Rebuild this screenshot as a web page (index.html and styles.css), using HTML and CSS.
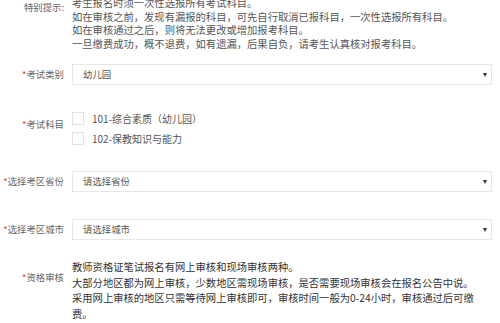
FILE: index.html
```html
<!DOCTYPE html>
<html lang="zh-CN">

<head>
    <meta charset="utf-8">
    <meta name="viewport" content="width=device-width, initial-scale=1.0">
    <title>报名信息</title>

    <link rel="stylesheet" href="styles.css">

</head>

<body>

    <form class="baoming">

        <div class="rad tips">
            <span class="label">特别提示:</span>
            <div class="felt tekst">
                考生报名时须一次性选报所有考试科目。<br>
                如在审核之前，发现有漏报的科目，可先自行取消已报科目，一次性选报所有科目。<br>
                如在审核通过之后，则将无法更改或增加报考科目。<br>
                一旦缴费成功，概不退费，如有遗漏，后果自负，请考生认真核对报考科目。
            </div>
        </div>

        <div class="rad">
            <span class="label"><i>*</i>考试类别</span>
            <div class="felt vaelg">幼儿园</div>
        </div>

        <div class="rad fag">
            <span class="label"><i>*</i>考试科目</span>
            <div class="felt">
                <label class="boks"><span class="kryds"></span>101-综合素质（幼儿园）</label>
                <label class="boks"><span class="kryds"></span>102-保教知识与能力</label>
            </div>
        </div>

        <div class="rad">
            <span class="label"><i>*</i>选择考区省份</span>
            <div class="felt vaelg">请选择省份</div>
        </div>

        <div class="rad">
            <span class="label"><i>*</i>选择考区城市</span>
            <div class="felt vaelg">请选择城市</div>
        </div>

        <div class="rad review">
            <span class="label"><i>*</i>资格审核</span>
            <div class="felt tekst">
                教师资格证笔试报名有网上审核和现场审核两种。<br>
                大部分地区都为网上审核，少数地区需现场审核，是否需要现场审核会在报名公告中说。<br>
                采用网上审核的地区只需等待网上审核即可，审核时间一般为0-24小时，审核通过后可缴费。
            </div>
        </div>

    </form>

</body>

</html>
```

FILE: styles.css
```css
body {
    margin: 0;
    background: #fff;
    font-family: "Noto Sans CJK SC", "Noto Sans", sans-serif;
    color: #555;
}

.baoming {
    width: 500px;
    margin-top: -4px;
}

.rad {
    display: flex;
    gap: 8px;
    margin-bottom: 27px;
}

.label {
    flex: none;
    width: 64px;
    text-align: right;
    font-size: 9.4px;
    line-height: 14px;
    color: #666;
}

.label i {
    font-style: normal;
    color: #e0463c;
}

.felt {
    width: 420px;
}

.tips {
    margin-bottom: 14px;
}

.tips .label {
    padding-top: 4px;
}

.tips .tekst {
    font-size: 10.3px;
    line-height: 13.5px;
    color: #555;
}

.vaelg {
    position: relative;
    box-sizing: border-box;
    height: 21px;
    padding-left: 10px;
    border: 1px solid #e6e6e6;
    font-size: 9.4px;
    line-height: 19px;
    color: #555;
}

.vaelg::after {
    content: "";
    position: absolute;
    right: 4px;
    top: 8px;
    border-left: 2.5px solid transparent;
    border-right: 2.5px solid transparent;
    border-top: 4px solid #333;
}

.rad .label:has(+ .vaelg) {
    line-height: 21px;
}

.fag {
    margin-bottom: 26px;
}

.fag .label {
    padding-top: 5px;
}

.boks {
    display: flex;
    align-items: center;
    gap: 8px;
    height: 13px;
    margin-bottom: 7px;
    font-size: 10px;
    color: #555;
}

.boks:last-child {
    margin-bottom: 0;
}

.kryds {
    box-sizing: border-box;
    width: 12px;
    height: 13px;
    border: 1px solid #e2e2e2;
}

.review {
    margin-top: -8px;
}

.review .label {
    padding-top: 11px;
}

.review .tekst {
    width: 410px;
    font-size: 10.3px;
    line-height: 15.5px;
    color: #333;
}
```
